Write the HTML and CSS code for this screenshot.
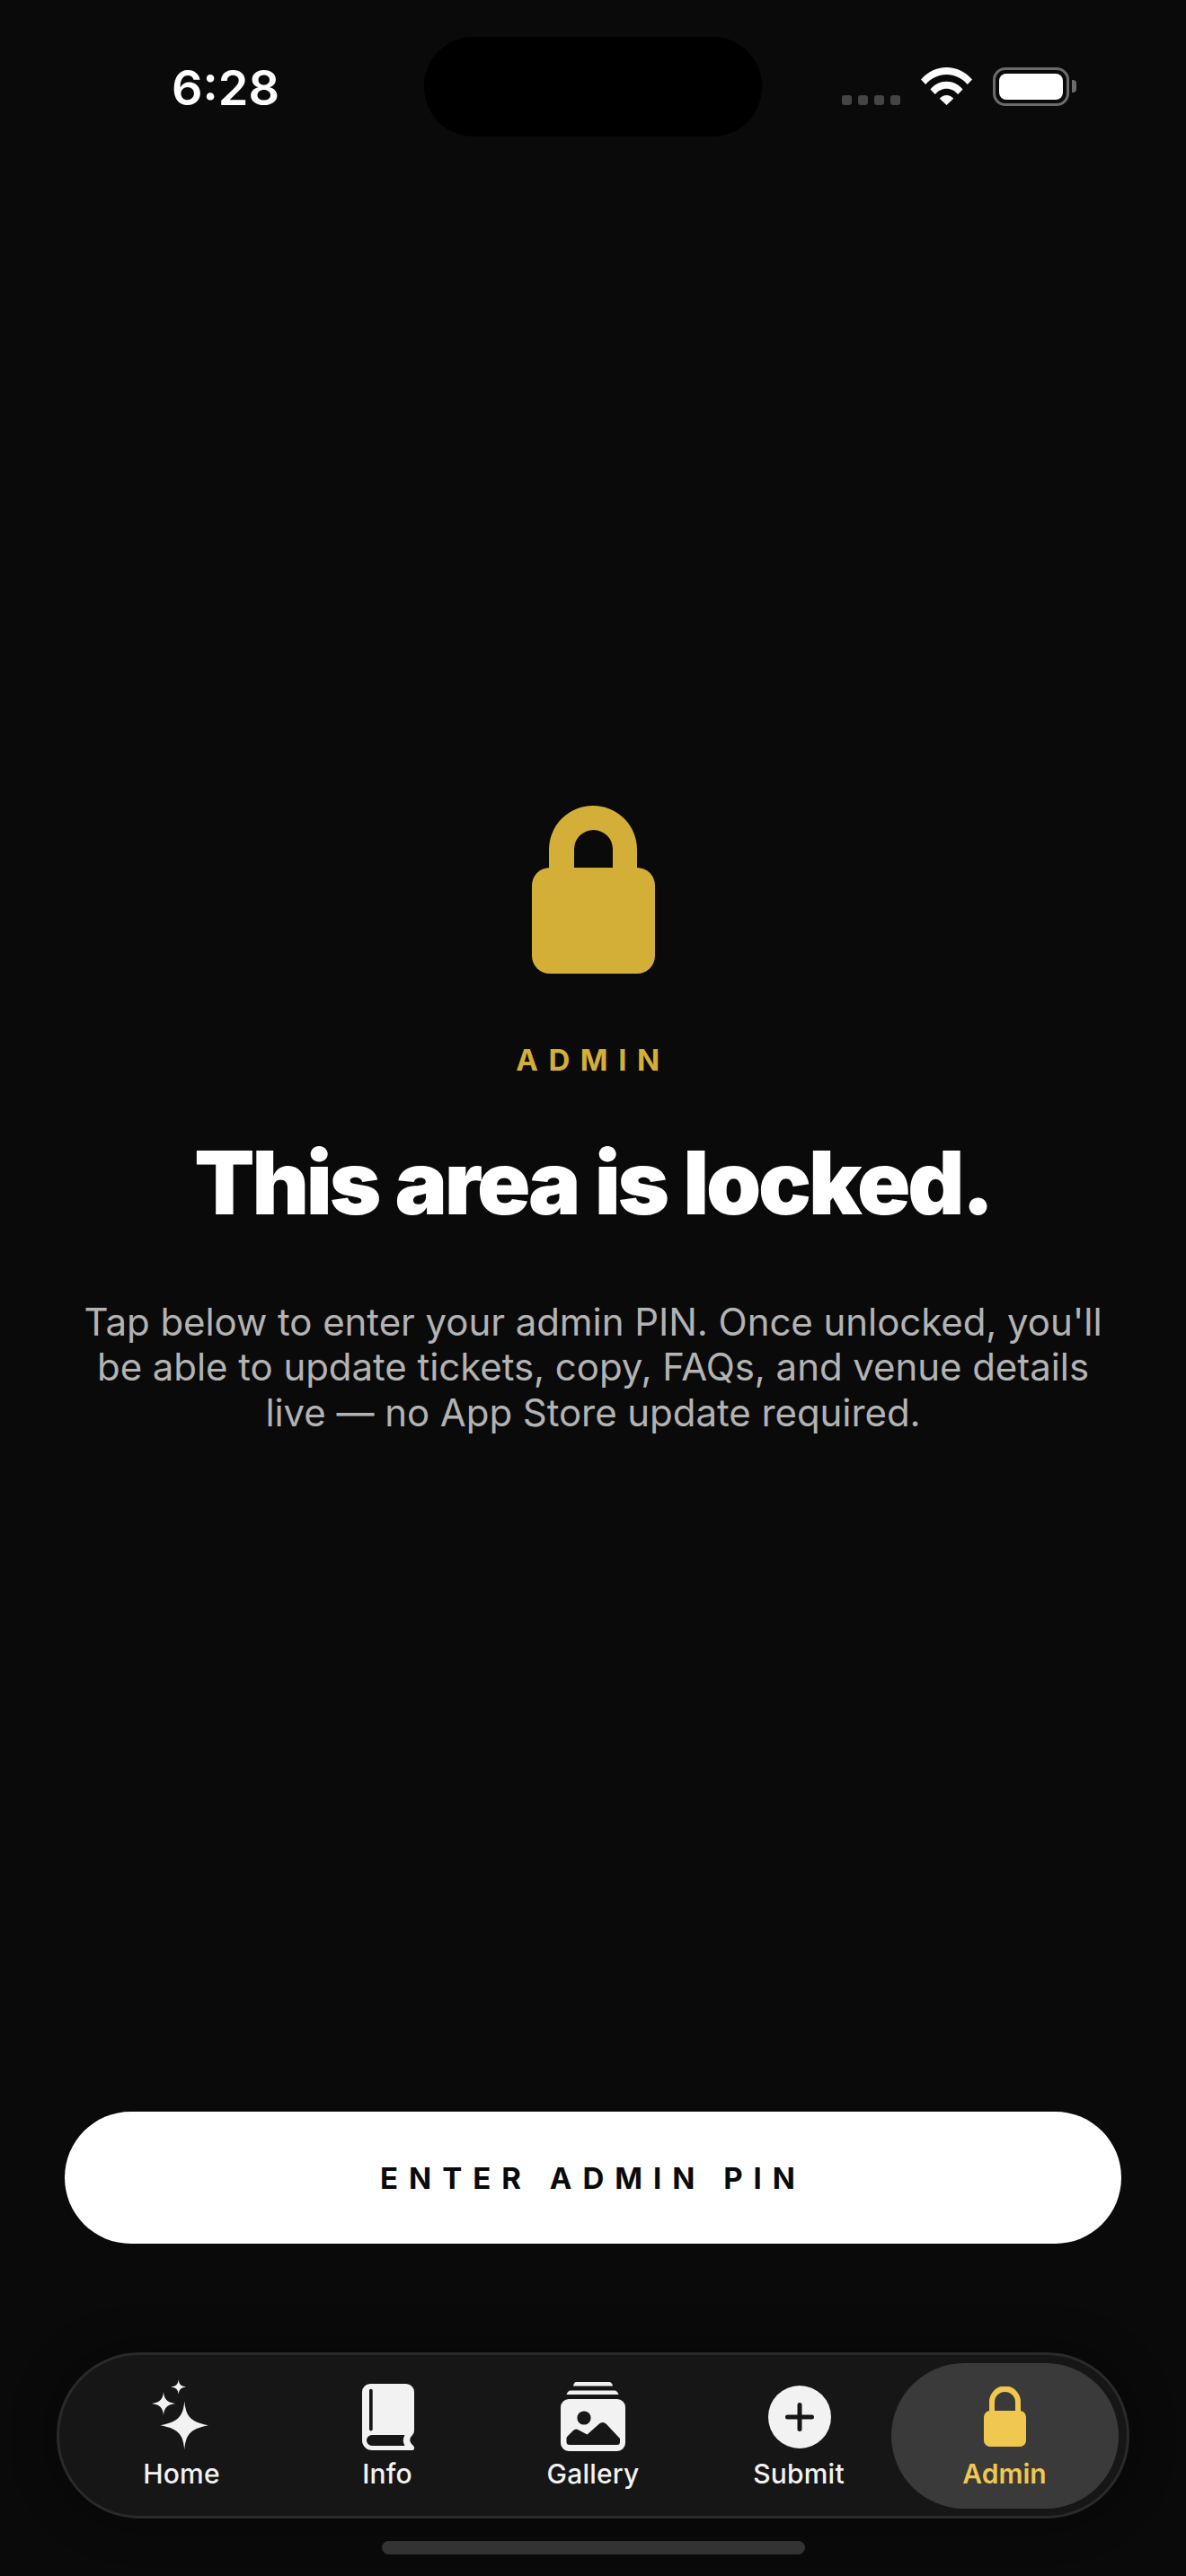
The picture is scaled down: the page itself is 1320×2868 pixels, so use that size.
FILE: index.html
```html
<!DOCTYPE html>
<html lang="en">
<head>
<meta charset="utf-8">
<title>Admin</title>
<link rel="stylesheet" href="styles.css">
</head>
<body>
<div class="page">
  <header class="status">
    <div class="time">6:28</div>
    <div class="island"></div>
    <div class="sys">
      <div class="dots"><i></i><i></i><i></i><i></i></div>
      <svg class="wifi" viewBox="0 0 57 42"><path d="M0 13.5C7.500 4.800 17.500 0 28.500 0S49.500 4.800 57 13.500L51.800 19C45.800 12 37.500 8 28.500 8S11.200 12 5.200 19Z"/><path d="M10.500 24.500C15 19 21.500 15.700 28.500 15.700S42 19 46.500 24.500L41.200 30C38 26 33.500 23.700 28.500 23.700S19 26 15.800 30Z"/><path d="M20.800 34.800C22.800 32.500 25.500 31 28.500 31S34.200 32.500 36.200 34.800L28.500 42Z"/></svg>
      <div class="battery"><div class="battery-fill"></div></div>
      <div class="battery-cap"></div>
    </div>
  </header>

  <main class="main">
    <svg class="big-lock" viewBox="0 0 137 187"><path d="M19 72V49a49 49 0 0 1 98 0V72H90V48.500a21.500 21.500 0 0 0-43 0V72Z"/><rect y="69" width="137" height="118" rx="20"/></svg>
    <div class="eyebrow">ADMIN</div>
    <h1 class="title">This area is locked.</h1>
    <p class="copy">Tap below to enter your admin PIN. Once unlocked, you'll be able to update tickets, copy, FAQs, and venue details live — no App Store update required.</p>
  </main>

  <div class="cta-wrap"><button class="cta">ENTER ADMIN PIN</button></div>

  <nav class="tabs">
    <div class="tab">
      <svg class="ic-home" viewBox="0 0 63 78"><path d="M36.300 24.300C37.800 39 41 47.500 63.300 51.300 41 55.100 37.800 63.600 36.300 78.300 34.800 63.600 31.600 55.100 9.300 51.300 31.600 47.500 34.800 39 36.300 24.300Z"/><path d="M13 14C13.800 21.500 16 25.500 26 27 16 28.500 13.800 32.500 13 40 12.200 32.500 10 28.500 0 27 10 25.500 12.200 21.500 13 14Z"/><path d="M29.700 0C30.200 5 31.500 7.500 38.200 8.500 31.500 9.500 30.200 12 29.700 17 29.200 12 27.900 9.500 21.200 8.500 27.900 7.500 29.200 5 29.700 0Z"/></svg>
      <span>Home</span>
    </div>
    <div class="tab">
      <svg class="ic-info" viewBox="0 0 58 74"><path fill-rule="evenodd" d="M9 0H49A9 9 0 0 1 58 9V52Q58 55 56 57Q50 63 57 69Q58.500 70.500 58 72.500Q57.500 74 55.500 74H11A11 11 0 0 1 0 63V9A9 9 0 0 1 9 0ZM9.800 5.700A1.900 1.900 0 0 0 8 7.600V51A1.900 1.900 0 0 0 11.700 51V7.600A1.900 1.900 0 0 0 9.800 5.700ZM11 57A6 6 0 0 0 11 69H47.500Q44 63 47.500 57Z"/></svg>
      <span>Info</span>
    </div>
    <div class="tab">
      <svg class="ic-gallery" viewBox="0 0 72 77"><path d="M17 0H54Q57 0 58 4.500H14Q15 0 17 0Z"/><path d="M11 9.500H60Q63 9.500 64.500 14H6.500Q8 9.500 11 9.500Z"/><path fill-rule="evenodd" d="M9 19H63A9 9 0 0 1 72 28V68A9 9 0 0 1 63 77H9A9 9 0 0 1 0 68V28A9 9 0 0 1 9 19ZM26 32.400A7.600 7.600 0 1 0 26 47.600A7.600 7.600 0 1 0 26 32.400ZM46.700 45Q44.500 45 43 46.500L29.500 58.500L21 54Q17 51 14 54L7.500 60.500Q6.500 61.500 6.500 63V66.500Q6.500 70 10 70H63Q66 70 66 66.500V63L51 47Q49 45 46.700 45Z"/></svg>
      <span>Gallery</span>
    </div>
    <div class="tab">
      <svg class="ic-submit" viewBox="0 0 70 70"><circle cx="35" cy="35" r="35"/><path class="plus" d="M35 21.500V48.500M21.500 35H48.500"/></svg>
      <span>Submit</span>
    </div>
    <div class="tab tab-active">
      <svg class="ic-admin" viewBox="0 0 47 67"><path d="M6 29V17a17.500 17.500 0 0 1 35 0V29H35V17.500a11.500 11.500 0 0 0-23 0V29Z"/><rect y="27" width="47" height="40" rx="7"/></svg>
      <span>Admin</span>
    </div>
  </nav>

  <div class="home-bar"></div>
</div>
</body>
</html>
```
FILE: styles.css
```css
* { box-sizing: border-box; }
html, body { margin: 0; padding: 0; background: #0a0a0a; }
body { font-family: Inter, "Liberation Sans", sans-serif; }
.page {
  width: 1320px;
  height: 2868px;
  padding-bottom: 24px;
  display: flex;
  flex-direction: column;
  overflow: hidden;
  background: #0a0a0a;
}

/* status bar */
.status {
  height: 152px;
  padding-top: 41px;
  display: grid;
  grid-template-columns: 472px 376px 1fr;
  align-items: start;
  flex: none;
}
.time {
  padding-left: 191px;
  padding-top: 37px;
  font-size: 54px;
  line-height: 40px;
  font-weight: 600;
  color: #fff;
}
.island { height: 111px; border-radius: 55px; background: #000; }
.sys { display: flex; align-items: flex-start; padding-top: 34px; padding-left: 89px; }
.dots { display: flex; gap: 7px; margin-top: 31px; }
.dots i { width: 11px; height: 11px; border-radius: 3px; background: #444; display: block; }
.wifi { width: 57px; height: 42px; fill: #fff; margin-left: 23px; }
.battery {
  width: 85px;
  height: 43px;
  margin-left: 23px;
  border: 3px solid #6b6b6b;
  border-radius: 14px;
  padding: 4px;
}
.battery-fill { width: 100%; height: 100%; background: #fff; border-radius: 8px; }
.battery-cap {
  width: 5px;
  height: 14px;
  margin: 14px 0 0 3px;
  background: #6b6b6b;
  border-radius: 0 4px 4px 0;
}

/* main */
.main {
  flex: 1;
  display: flex;
  flex-direction: column;
  align-items: center;
  justify-content: center;
  padding: 0 90px 8px;
  min-height: 0;
}
.big-lock { width: 137px; height: 187px; fill: #d4af37; display: block; flex: none; }
.eyebrow {
  margin-top: 76px;
  font-size: 33px;
  line-height: 40px;
  font-weight: 700;
  letter-spacing: 11.550px;
  color: #d4af37;
}
.title {
  margin: 62px 0 0;
  font-size: 98px;
  line-height: 110px;
  font-weight: 900;
  letter-spacing: -3.200px;
  word-spacing: 2px;
  color: #fff;
  white-space: nowrap;
}
.copy {
  margin: 75px 0 0;
  width: 1140px;
  font-size: 42px;
  line-height: 50.500px;
  font-weight: 400;
  letter-spacing: -0.060px;
  text-align: center;
  color: #b3b3b3;
}

/* button */
.cta-wrap { flex: none; padding: 0 72px; }
.cta {
  display: block;
  width: 100%;
  height: 147px;
  border: 0;
  border-radius: 74px;
  background: #fff;
  color: #0a0a0a;
  font-family: inherit;
  font-size: 33px;
  font-weight: 700;
  letter-spacing: 12px;
}

/* tab bar */
.tabs {
  flex: none;
  margin: 121px 63px 0;
  height: 185px;
  border: 3px solid #2a2a2a;
  border-radius: 92px;
  background: #161616;
  display: grid;
  grid-template-columns: repeat(5, 229px);
  justify-content: center;
  align-items: center;
  box-shadow: 0 0 50px rgba(0, 0, 0, .45);
}
.tab {
  height: 162px;
  display: flex;
  flex-direction: column;
  align-items: center;
  color: #f2f2f2;
  font-size: 30px;
  line-height: 36px;
  font-weight: 450;
  letter-spacing: 0.200px;
  position: relative;
}
.tab svg { fill: #f2f2f2; display: block; position: absolute; left: 50%; }
.tab span { position: absolute; top: 105px; white-space: nowrap; }
.ic-home { width: 63px; height: 78px; top: 18px; margin-left: -33px; }
.ic-info { width: 58px; height: 74px; top: 23px; margin-left: -28px; }
.ic-gallery { width: 72px; height: 77px; top: 21px; margin-left: -36px; }
.ic-submit { width: 70px; height: 70px; top: 25px; margin-left: -34px; }
.tab .plus { fill: none; stroke: #161616; stroke-width: 5px; stroke-linecap: round; }
.tab-active {
  margin: 0 -12px;
  border-radius: 81px;
  background: #3a3a3a;
  color: #f0c850;
  font-weight: 600;
  letter-spacing: 0;
}
.tab-active svg { fill: #f0c850; }
.ic-admin { width: 47px; height: 67px; top: 26px; margin-left: -23.500px; }

.home-bar {
  flex: none;
  width: 471px;
  height: 15px;
  margin: 25px auto 0;
  border-radius: 8px;
  background: #333;
}
```
